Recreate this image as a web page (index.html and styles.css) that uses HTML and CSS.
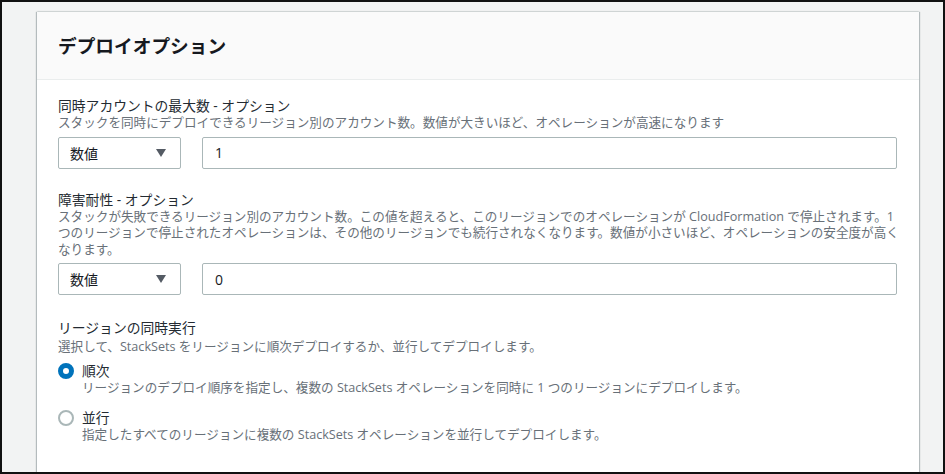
FILE: index.html
```html
<!DOCTYPE html>
<html lang="ja">
<head>
<meta charset="utf-8">
<title>デプロイオプション</title>
<link rel="stylesheet" href="styles.css">
</head>
<body>
<div class="frame">
  <section class="card">
    <header class="card-header">
      <h2 class="card-title">デプロイオプション</h2>
    </header>
    <div class="card-body">
      <div class="field">
        <div class="label">同時アカウントの最大数 - オプション</div>
        <div class="desc">スタックを同時にデプロイできるリージョン別のアカウント数。数値が大きいほど、オペレーションが高速になります</div>
        <div class="controls">
          <div class="select"><span class="select-text">数値</span><span class="caret"></span></div>
          <div class="input">1</div>
        </div>
      </div>

      <div class="field">
        <div class="label">障害耐性 - オプション</div>
        <div class="desc desc-lines">スタックが失敗できるリージョン別のアカウント数。この値を超えると、このリージョンでのオペレーションが <span class="latin">CloudFormation</span> で停止されます。1<br>つのリージョンで停止されたオペレーションは、その他のリージョンでも続行されなくなります。数値が小さいほど、オペレーションの安全度が高く<br>なります。</div>
        <div class="controls">
          <div class="select"><span class="select-text">数値</span><span class="caret"></span></div>
          <div class="input">0</div>
        </div>
      </div>

      <div class="field field-radio">
        <div class="label">リージョンの同時実行</div>
        <div class="desc">選択して、<span class="latin">StackSets</span> をリージョンに順次デプロイするか、並行してデプロイします。</div>
        <div class="radios">
          <div class="radio">
            <span class="dot dot-checked"></span>
            <div class="radio-text">
              <div class="radio-label">順次</div>
              <div class="desc">リージョンのデプロイ順序を指定し、複数の <span class="latin">StackSets</span> オペレーションを同時に 1 つのリージョンにデプロイします。</div>
            </div>
          </div>
          <div class="radio">
            <span class="dot"></span>
            <div class="radio-text">
              <div class="radio-label">並行</div>
              <div class="desc">指定したすべてのリージョンに複数の <span class="latin">StackSets</span> オペレーションを並行してデプロイします。</div>
            </div>
          </div>
        </div>
      </div>
    </div>
  </section>
</div>
</body>
</html>
```

FILE: styles.css
```css
* { box-sizing: border-box; }

html, body {
  margin: 0;
  padding: 0;
}

body {
  font-family: "Open Sans", "Noto Sans CJK JP", sans-serif;
  color: #16191f;
  background: #000;
}

.frame {
  width: 945px;
  height: 474px;
  border: 2px solid #111;
  background: #f2f3f3;
  padding: 10px 0 0 35px;
  overflow: hidden;
}

.card {
  width: 882px;
  background: #fff;
  box-shadow: 1px 0 1px rgba(0, 28, 36, 0.25), -1px 0 1px rgba(0, 28, 36, 0.25), 0 -1px 1px rgba(0, 28, 36, 0.06);
  min-height: 500px;
}

.card-header {
  height: 68px;
  background: #fafafa;
  border-bottom: 1px solid #eaeded;
  padding: 0 21px;
  display: flex;
  align-items: center;
}

.card-title {
  margin: 0;
  font-size: 18.7px;
  font-weight: 700;
  line-height: 24px;
  color: #16191f;
}

.card-body {
  padding: 16px 22px 0 21px;
}

.field + .field {
  margin-top: 21px;
}

.field-radio {
  margin-top: 23px !important;
}

.label {
  font-size: 13.8px;
  line-height: 19px;
  color: #232a31;
}

.desc {
  font-size: 12.6px;
  line-height: 16.5px;
  color: #687078;
}

.desc-lines {
  white-space: nowrap;
}

.field-radio > .desc {
  margin-top: 2px;
}

.controls {
  display: flex;
  gap: 21px;
  margin-top: 5px;
}

.select, .input {
  height: 32px;
  border: 1px solid #aab7b8;
  border-radius: 2px;
  background: #fff;
  font-size: 14px;
  color: #16191f;
  display: flex;
  align-items: center;
}

.select {
  width: 123px;
  padding: 0 14px 0 11px;
  justify-content: space-between;
}

.caret {
  width: 0;
  height: 0;
  border-left: 5px solid transparent;
  border-right: 5px solid transparent;
  border-top: 8px solid #545b64;
}

.input {
  flex: 1;
  padding: 0 12px;
}

.radios {
  margin-top: 5px;
  display: flex;
  flex-direction: column;
  gap: 12px;
}

.radio {
  display: flex;
  align-items: flex-start;
  gap: 8px;
}

.dot {
  flex: none;
  width: 16px;
  height: 16px;
  margin-top: 2px;
  border-radius: 50%;
  border: 2px solid #aab7b8;
  background: #fff;
}

.dot-checked {
  border: 5px solid #0073bb;
}

.radio-label {
  font-size: 13.8px;
  line-height: 19px;
  color: #232a31;
}
```
